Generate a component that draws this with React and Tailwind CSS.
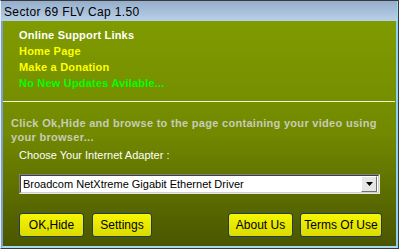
export default function App() {
  const font = { fontFamily: '"Liberation Sans", Arial, sans-serif' }

  return (
    <div
      className="w-[399px] h-[249px] flex flex-col border-t border-r border-b border-t-[#3a3a3a] border-r-[#3a3a3a] border-b-[#3a3a3a] border-l border-l-[#e8eef6] overflow-hidden"
      style={font}
    >
      {/* title bar */}
      <div className="h-[20px] shrink-0 flex items-center pl-[3px] pt-px bg-gradient-to-b from-[#95aecb] to-[#b9d0e8] border-r border-r-[#9fd8f2] text-[12px] tracking-[0.35px] text-black">
        Sector 69 FLV Cap 1.50
      </div>

      {/* body */}
      <div className="flex-1 flex flex-col border-l-2 border-l-[#7c9ed2] border-r-2 border-r-[#8fd2f0] border-b-2 border-b-[#a6d8f0]">
        <div className="flex-1 flex flex-col bg-gradient-to-b from-[#7f9b00] via-[#728900] to-[#4a5600] pt-[6px]">
          <div className="pl-[16px] flex flex-col text-[11px] font-bold leading-[16px] tracking-[0.2px]">
            <span className="text-white">Online Support Links</span>
            <span className="text-[#ffff00]">Home Page</span>
            <span className="text-[#ffff00]">Make a Donation</span>
            <span className="text-[#00ff00]">No New Updates Avilable...</span>
          </div>

          <div className="mt-[10px] h-px mr-px bg-[#f0f4d8]" />

          <div className="mt-[14px] pl-[8px] text-[11px] font-bold leading-[14px] tracking-[0.3px] text-[#c8ccb8]">
            <div>Click Ok,Hide and browse to the page containing your video using</div>
            <div>your browser...</div>
          </div>

          <div className="mt-[4px] pl-[16px] text-[11px] leading-[14px] text-white">
            Choose Your Internet Adapter :
          </div>

          {/* dropdown */}
          <div className="mt-[12px] ml-[16px] w-[361px] h-[20px] border border-t-[#808080] border-l-[#808080] border-r-[#e8e8e8] border-b-[#e8e8e8]">
            <div className="h-full flex items-center bg-white border border-t-[#404040] border-l-[#404040] border-r-[#d4d0c8] border-b-[#d4d0c8]">
              <span className="flex-1 pl-[2px] text-[11px] text-black leading-none">
                Broadcom NetXtreme Gigabit Ethernet Driver
              </span>
              <div className="w-[16px] h-[16px] mr-px flex items-center justify-center bg-[#e6e6e6] border border-t-white border-l-white border-r-[#707070] border-b-[#707070]">
                <svg width="7" height="4" viewBox="0 0 7 4">
                  <path d="M0 0h7L3.5 4z" fill="#000" />
                </svg>
              </div>
            </div>
          </div>

          {/* buttons */}
          <div className="mt-[19px] flex pl-[16px] pr-[14px] text-[12px] text-black">
            <Btn w="w-[65px]">OK,Hide</Btn>
            <Btn w="w-[60px] ml-[8px]">Settings</Btn>
            <div className="flex-1" />
            <Btn w="w-[65px]">About Us</Btn>
            <Btn w="w-[82px] ml-[7px]">Terms Of Use</Btn>
          </div>
        </div>
      </div>
    </div>
  )
}

function Btn({ w, children }) {
  return (
    <div
      className={`${w} h-[24px] flex items-center justify-center rounded-[3px] border border-[#1d3b63] bg-gradient-to-b from-[#f6f600] to-[#dada00]`}
    >
      {children}
    </div>
  )
}
